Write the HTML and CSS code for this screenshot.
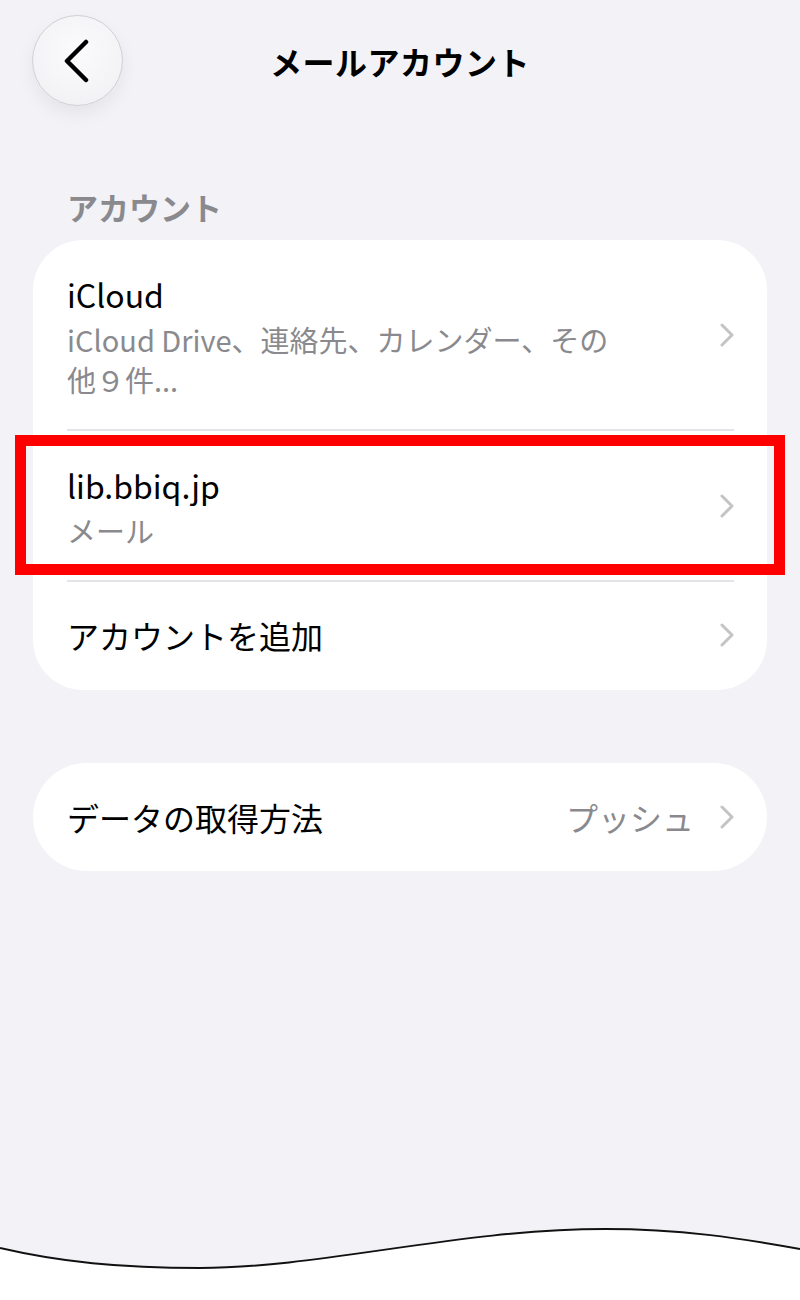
FILE: index.html
```html
<!DOCTYPE html>
<html lang="ja">
<head>
<meta charset="utf-8">
<title>メールアカウント</title>
<link rel="stylesheet" href="styles.css">
</head>
<body>
<header class="topbar">
  <div class="back">
    <svg width="30" height="44" viewBox="0 0 30 44"><path d="M25 3 L6 22 L25 41" fill="none" stroke="#000" stroke-width="4.5" stroke-linecap="round" stroke-linejoin="round"/></svg>
  </div>
  <h1 class="title">メールアカウント</h1>
  <div></div>
</header>

<div class="section-label">アカウント</div>
<section class="card">
  <div class="row">
    <div class="text">
      <div class="main">iCloud</div>
      <div class="sub">iCloud Drive、連絡先、カレンダー、その他９件...</div>
    </div>
    <svg class="chev" width="14" height="24" viewBox="0 0 14 24"><path d="M2 2 L12 12 L2 22" fill="none" stroke="#c4c4c7" stroke-width="3" stroke-linecap="round" stroke-linejoin="round"/></svg>
  </div>
  <div class="row sep highlighted">
    <div class="text">
      <div class="main">lib.bbiq.jp</div>
      <div class="sub">メール</div>
    </div>
    <svg class="chev" width="14" height="24" viewBox="0 0 14 24"><path d="M2 2 L12 12 L2 22" fill="none" stroke="#c4c4c7" stroke-width="3" stroke-linecap="round" stroke-linejoin="round"/></svg>
    <div class="redbox"></div>
  </div>
  <div class="row sep single">
    <div class="text">
      <div class="main">アカウントを追加</div>
    </div>
    <svg class="chev" width="14" height="24" viewBox="0 0 14 24"><path d="M2 2 L12 12 L2 22" fill="none" stroke="#c4c4c7" stroke-width="3" stroke-linecap="round" stroke-linejoin="round"/></svg>
  </div>
</section>

<section class="card card2">
  <div class="row single">
    <div class="text">
      <div class="main">データの取得方法</div>
    </div>
    <div class="right">
      <span class="value">プッシュ</span>
      <svg class="chev" width="14" height="24" viewBox="0 0 14 24"><path d="M2 2 L12 12 L2 22" fill="none" stroke="#c4c4c7" stroke-width="3" stroke-linecap="round" stroke-linejoin="round"/></svg>
    </div>
  </div>
</section>

<div class="wave">
  <svg width="800" height="80" viewBox="0 0 800 80">
    <path d="M0 28 C 60 42, 120 48, 200 48 C 320 48, 460 9, 605 9 C 680 9, 740 18, 800 29 L800 80 L0 80 Z" fill="#fff"/>
    <path d="M0 28 C 60 42, 120 48, 200 48 C 320 48, 460 9, 605 9 C 680 9, 740 18, 800 29" fill="none" stroke="#111" stroke-width="2"/>
  </svg>
</div>
</body>
</html>
```
FILE: styles.css
```css
* { box-sizing: border-box; }
html, body { margin: 0; padding: 0; }
body {
  background: #f2f2f7;
  font-family: "Noto Sans CJK JP", "Noto Sans", sans-serif;
  color: #000;
  min-height: 1300px;
  display: flex;
  flex-direction: column;
}
.topbar {
  display: grid;
  grid-template-columns: 1fr auto 1fr;
  align-items: center;
  padding: 15px 32px 0;
  height: 106px;
}
.back {
  width: 91px;
  height: 91px;
  border-radius: 50%;
  background: radial-gradient(circle at 50% 40%, #fbfbfd 0%, #f3f3f6 70%, #ececf0 100%);
  border: 1px solid #cfcfd4;
  box-shadow: 0 8px 18px rgba(0,0,0,0.06);
  display: flex;
  align-items: center;
  justify-content: center;
  padding-right: 4px;
}
.title {
  margin: 0;
  font-size: 32px;
  font-weight: 700;
  line-height: 44px;
  letter-spacing: 0.5px;
}
.section-label {
  margin: 81px 0 0 67px;
  font-size: 31px;
  font-weight: 700;
  color: #8a8a8e;
  line-height: 40px;
}
.card {
  margin: 13px 33px 0;
  background: #fff;
  border-radius: 50px;
  padding: 0 33px 0 34px;
}
.card2 {
  margin-top: 73px;
  border-radius: 54px;
}
.row {
  position: relative;
  display: flex;
  align-items: center;
  justify-content: space-between;
  padding: 31px 0 30px;
}
.row.sep { border-top: 2px solid #e4e4e8; }
.row.single { padding: 30px 0 32px; }
.card2 .row.single { padding: 31px 0 31px; }
.main {
  font-size: 32px;
  line-height: 46px;
}
.sub {
  margin-top: 2px;
  font-size: 29px;
  line-height: 40px;
  color: #8a8a8e;
  max-width: 556px;
}
.chev { display: block; flex: none; }
.right {
  display: flex;
  align-items: center;
  gap: 26px;
}
.value {
  font-size: 32px;
  line-height: 46px;
  color: #8a8a8e;
}
.redbox {
  position: absolute;
  left: -52px;
  right: -51px;
  top: 4px;
  height: 140px;
  border: 11px solid #ff0000;
}
.wave {
  margin-top: auto;
}
.wave svg { display: block; }
```
